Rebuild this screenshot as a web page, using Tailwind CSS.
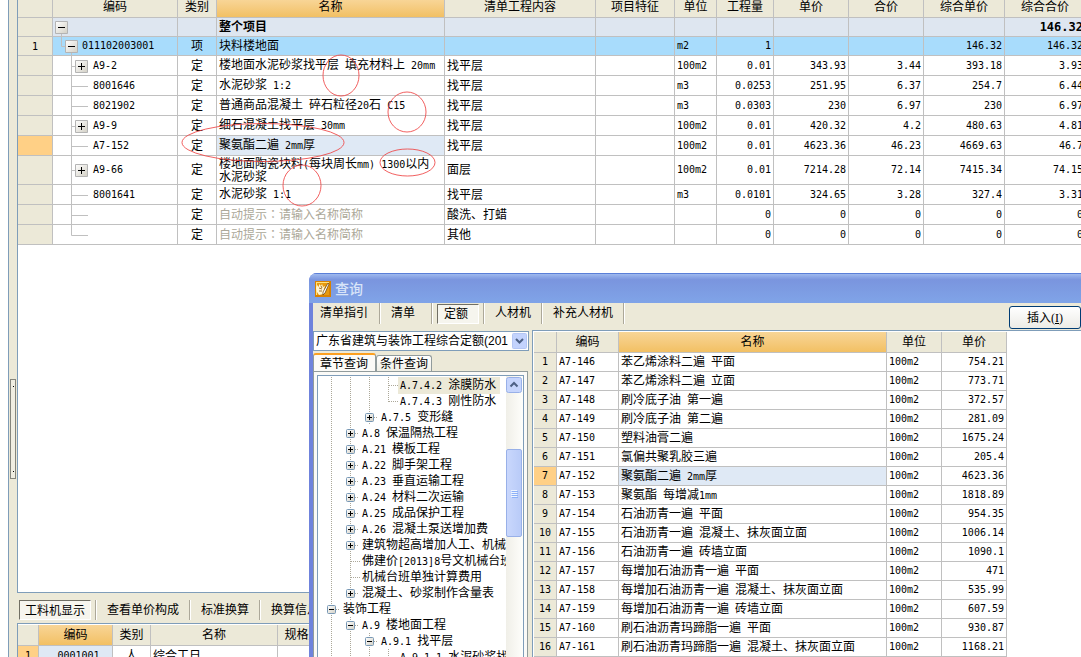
<!DOCTYPE html>
<html lang="zh-CN">
<head>
<meta charset="utf-8">
<title>工程计价</title>
<script src="https://cdn.jsdelivr.net/npm/@tailwindcss/browser@4"></script>
</head>
<body class="h-screen overflow-hidden bg-white font-['DejaVu_Sans_Mono','Noto_Sans_CJK_SC',monospace] text-[12px] leading-3 text-black [&_small]:text-[10px]">

<!-- Shared tree glyphs -->
<svg class="absolute size-0" aria-hidden="true">
  <defs>
    <linearGradient id="face" x1="0" y1="0" x2="1" y2="1"><stop offset="0" stop-color="#fff"/><stop offset="1" stop-color="#d2cfc4"/></linearGradient>
    <symbol id="g-plus" viewBox="0 0 40 19"><path d="M18.5 0v19M18.5 10.5H24" stroke="#c0c0c0" fill="none"/><path d="M22.5 4.5h12v12h-12z" fill="url(#face)" stroke="#b4b4b4"/><path d="M25 10.5h7M28.5 7v7" stroke="#000"/></symbol>
    <symbol id="g-leaf" viewBox="0 0 40 19"><path d="M18.5 0v19M18.5 10.5H35" stroke="#c0c0c0" fill="none"/></symbol>
    <symbol id="g-last" viewBox="0 0 40 19"><path d="M18.5 0v10.5H35" stroke="#c0c0c0" fill="none"/></symbol>
    <symbol id="t-line" viewBox="0 0 19 16"><path d="M9.5 0v16" stroke="#aca899" stroke-dasharray="1 1"/></symbol>
    <symbol id="t-tee" viewBox="0 0 19 16"><path d="M9.5 0v16M10 8.5h9" stroke="#aca899" stroke-dasharray="1 1"/></symbol>
    <symbol id="t-end" viewBox="0 0 19 16"><path d="M9.5 0v9M10 8.5h9" stroke="#aca899" stroke-dasharray="1 1"/></symbol>
    <symbol id="t-plus" viewBox="0 0 19 16"><path d="M9.5 0v16M14 8.5h4" stroke="#aca899" stroke-dasharray="1 1"/><rect x="5.5" y="4.5" width="8" height="8" rx="1" fill="url(#face)" stroke="#7898b5"/><path d="M7 8.5h5M9.5 6v5" stroke="#000"/></symbol>
    <symbol id="t-minus" viewBox="0 0 19 16"><path d="M9.5 0v16M14 8.5h4" stroke="#aca899" stroke-dasharray="1 1"/><rect x="5.5" y="4.5" width="8" height="8" rx="1" fill="url(#face)" stroke="#7898b5"/><path d="M7 8.5h5" stroke="#000"/></symbol>
  </defs>
</svg>

<div class="flex h-full">
  <div class="w-2 shrink-0 bg-white"></div>
  <div class="w-[9px] shrink-0 border-l border-[#7f9db9] bg-[#ece9d8]">
    <div class="mt-[379px] ml-px flex h-[100px] w-1.5 flex-col items-center justify-between border border-[#85857c] bg-[#f0eee2] py-1.5">
      <span class="size-px bg-black"></span><span class="size-px bg-black"></span>
    </div>
  </div>

  <main class="flex min-w-0 flex-1 flex-col bg-[#ece9d8]">
    <section class="min-h-0 flex-1 overflow-hidden border-b border-l border-[#7f9db9] bg-white">
      <table class="w-[1068px] table-fixed border-separate border-spacing-0 whitespace-nowrap [&_td]:overflow-hidden [&_td]:border-r [&_td]:border-b [&_td]:border-[#c0c0c0] [&_td]:p-0 [&_th]:border-r [&_th]:border-b [&_th]:border-[#c0c0c0] [&_th]:p-0 [&_tbody_th]:bg-[#ece9d8] [&_tbody_th]:font-normal [&_td:nth-child(3)]:text-center [&_td:nth-child(4)]:pl-0.5 [&_td:nth-child(5)]:pl-0.5 [&_td:nth-child(7)]:pl-0.5 [&_td:nth-child(7)]:text-[10px] [&_td:nth-child(n+8)]:pr-0.5 [&_td:nth-child(n+8)]:text-right [&_td:nth-child(n+8)]:text-[10px] [&_tbody_svg]:block [&_tbody_svg]:shrink-0 [&_td>div]:flex [&_td>div]:items-center [&_td>div]:text-[10px]">
        <colgroup><col class="w-[35px]"><col class="w-[125px]"><col class="w-[39px]"><col class="w-[228px]"><col class="w-[151px]"><col class="w-[79px]"><col class="w-[42px]"><col class="w-[57px]"><col class="w-[75px]"><col class="w-[75px]"><col class="w-[81px]"><col class="w-[81px]"></colgroup>
        <thead>
          <tr class="h-[18px] bg-[#ece9d8] align-top [&_th]:pt-px [&_th]:font-normal">
            <th></th><th>编码</th><th>类别</th><th class="bg-linear-to-b from-[#f8d596] to-[#f2c063]">名称</th><th>清单工程内容</th><th>项目特征</th><th>单位</th><th>工程量</th><th>单价</th><th>合价</th><th>综合单价</th><th>综合合价</th>
          </tr>
        </thead>
        <tbody>
          <tr class="h-[19px] bg-[#dee6f0] font-bold"><th></th><td><div><svg class="h-[18px] w-10" viewBox="0 0 40 18"><path d="M8.5 15v3" stroke="#c0c0c0"/><path d="M2.5 3.5h12v12h-12z" fill="url(#face)" stroke="#b4b4b4"/><path d="M5 9.5h7" stroke="#000"/></svg></div></td><td></td><td>整个项目</td><td></td><td></td><td></td><td></td><td></td><td></td><td></td><td class="text-[12px]!">146.32</td></tr>
          <tr class="h-[19px] bg-[#a8dcfc]"><th><small>1</small></th><td><div><svg class="h-[18px] w-[29px]" viewBox="0 0 29 18"><path d="M8.5 0v9.5H13M18.5 15v3" stroke="#c0c0c0" fill="none"/><path d="M12.5 3.5h12v12h-12z" fill="url(#face)" stroke="#b4b4b4"/><path d="M15 9.5h7" stroke="#000"/></svg>011102003001</div></td><td>项</td><td>块料楼地面</td><td></td><td></td><td>m2</td><td>1</td><td></td><td></td><td>146.32</td><td>146.32</td></tr>
          <tr class="h-5"><th></th><td><div><svg class="h-[19px] w-10"><use href="#g-plus"/></svg>A9-2</div></td><td>定</td><td>楼地面水泥砂浆找平层<small> </small>填充材料上<small> 20mm</small></td><td>找平层</td><td></td><td>100m2</td><td>0.01</td><td>343.93</td><td>3.44</td><td>393.18</td><td>3.93</td></tr>
          <tr class="h-5"><th></th><td><div><svg class="h-[19px] w-10"><use href="#g-leaf"/></svg>8001646</div></td><td>定</td><td>水泥砂浆<small> 1:2</small></td><td>找平层</td><td></td><td>m3</td><td>0.0253</td><td>251.95</td><td>6.37</td><td>254.7</td><td>6.44</td></tr>
          <tr class="h-5"><th></th><td><div><svg class="h-[19px] w-10"><use href="#g-leaf"/></svg>8021902</div></td><td>定</td><td>普通商品混凝土<small> </small>碎石粒径<small>20</small>石<small> C15</small></td><td>找平层</td><td></td><td>m3</td><td>0.0303</td><td>230</td><td>6.97</td><td>230</td><td>6.97</td></tr>
          <tr class="h-5"><th></th><td><div><svg class="h-[19px] w-10"><use href="#g-plus"/></svg>A9-9</div></td><td>定</td><td>细石混凝土找平层<small> 30mm</small></td><td>找平层</td><td></td><td>100m2</td><td>0.01</td><td>420.32</td><td>4.2</td><td>480.63</td><td>4.81</td></tr>
          <tr class="h-5"><th class="bg-[#ffd086]!"></th><td><div><svg class="h-[19px] w-10"><use href="#g-leaf"/></svg>A7-152</div></td><td>定</td><td class="bg-[#dfe9f5]">聚氨酯二遍<small> 2mm</small>厚</td><td>找平层</td><td></td><td>100m2</td><td>0.01</td><td>4623.36</td><td>46.23</td><td>4669.63</td><td>46.7</td></tr>
          <tr class="h-[29px]"><th></th><td><div><svg class="h-7 w-10" viewBox="0 0 40 28"><path d="M18.5 0v28M18.5 14.5H24" stroke="#c0c0c0" fill="none"/><path d="M22.5 8.5h12v12h-12z" fill="url(#face)" stroke="#b4b4b4"/><path d="M25 14.5h7M28.5 11v7" stroke="#000"/></svg>A9-66</div></td><td>定</td><td>楼地面陶瓷块料<small>(</small>每块周长<small>mm) 1300</small>以内<br>水泥砂浆</td><td>面层</td><td></td><td>100m2</td><td>0.01</td><td>7214.28</td><td>72.14</td><td>7415.34</td><td>74.15</td></tr>
          <tr class="h-5"><th></th><td><div><svg class="h-[19px] w-10"><use href="#g-leaf"/></svg>8001641</div></td><td>定</td><td>水泥砂浆<small> 1:1</small></td><td>找平层</td><td></td><td>m3</td><td>0.0101</td><td>324.65</td><td>3.28</td><td>327.4</td><td>3.31</td></tr>
          <tr class="h-5"><th></th><td><div><svg class="h-[19px] w-10"><use href="#g-leaf"/></svg></div></td><td>定</td><td class="text-[#aca899]">自动提示<span lang="zh-TW" class="font-['Noto_Sans_CJK_TC',sans-serif]">：</span>请输入名称简称</td><td>酸洗、打蜡</td><td></td><td></td><td>0</td><td>0</td><td>0</td><td>0</td><td>0</td></tr>
          <tr class="h-5"><th></th><td><div><svg class="h-[19px] w-10"><use href="#g-last"/></svg></div></td><td>定</td><td class="text-[#aca899]">自动提示<span lang="zh-TW" class="font-['Noto_Sans_CJK_TC',sans-serif]">：</span>请输入名称简称</td><td>其他</td><td></td><td></td><td>0</td><td>0</td><td>0</td><td>0</td><td>0</td></tr>
        </tbody>
      </table>
    </section>

    <section class="flex h-16 shrink-0 flex-col overflow-hidden">
      <div class="flex h-[30px] items-center pt-1 pl-0.5 [&>i]:mx-1 [&>i]:h-5 [&>i]:w-0.5 [&>i]:border-l [&>i]:border-[#aca899] [&>i]:bg-white">
        <button class="h-5 border border-t-[#716f64] border-r-white border-b-white border-l-[#716f64] bg-[#f6f5ee] px-[5px] pt-0.5">工料机显示</button><i></i>
        <button class="px-1.5">查看单价构成</button><i></i>
        <button class="px-1.5">标准换算</button><i></i>
        <button class="px-1.5">换算信息</button>
      </div>
      <div class="flex-1 overflow-hidden border-t border-l border-[#7f9db9] bg-white pt-px">
        <table class="w-[322px] table-fixed border-separate border-spacing-0 whitespace-nowrap [&_td]:border-r [&_td]:border-b [&_td]:border-[#c0c0c0] [&_td]:p-0 [&_th]:border-r [&_th]:border-b [&_th]:border-[#c0c0c0] [&_th]:p-0 [&_th]:font-normal">
          <colgroup><col class="w-[21px]"><col class="w-[74px]"><col class="w-[38px]"><col class="w-[127px]"><col class="w-[62px]"></colgroup>
          <thead><tr class="h-[21px] bg-[#ece9d8]"><th></th><th class="bg-linear-to-b from-[#f8d596] to-[#f2c063]">编码</th><th>类别</th><th>名称</th><th>规格型号</th></tr></thead>
          <tbody><tr class="h-5"><th class="bg-[#ffd086]"><small>1</small></th><td class="bg-[#dfe9f5] pl-1.5! text-center text-[10px]">0001001</td><td class="text-center">人</td><td class="pl-0.5!">综合工日</td><td></td></tr></tbody>
        </table>
      </div>
    </section>
  </main>
</div>

<!-- Review marks drawn over the sheet -->
<svg class="pointer-events-none absolute top-0 left-0 h-[250px] w-[500px]" viewBox="0 0 500 250" fill="none" stroke="#ee4444" stroke-opacity=".85" aria-hidden="true">
  <ellipse cx="341" cy="75.5" rx="18" ry="20.5"/><ellipse cx="407" cy="112" rx="19" ry="20"/><ellipse cx="263" cy="142.5" rx="81" ry="19"/><ellipse cx="407.5" cy="162.5" rx="27.5" ry="13.5"/><ellipse cx="302" cy="185.5" rx="19" ry="20.5"/>
</svg>

<!-- Query window -->
<div role="dialog" aria-label="查询" class="absolute top-[273px] right-0 bottom-0 left-[309px] flex flex-col overflow-hidden rounded-tl-lg bg-[#6f83dc]">
  <header class="flex h-[30px] shrink-0 items-center gap-1 border-t border-[#5a7fd8] bg-linear-to-b from-[#9fb9ee] via-[#7a95de] via-20% to-[#80a4e8] pl-1.5 text-[14px] text-[#d8e4f8]">
    <svg class="size-4" viewBox="0 0 16 16"><path d="M0 0h16v16H0z" fill="#d98200"/><path d="M1 1h13v13H1z" fill="#ffe27a"/><path d="M2 2h12v12H2z" fill="#e79a10"/><path d="M2 4l2 2 0-3 2 2 1-2 1 3 2-1-1 3 2 1-3 4-4 1-2-3-1-4z" fill="#fff4cf"/><path d="M4 7l3 1M4 10l3 0M6 5l1 2" stroke="#8a5000" stroke-width=".8"/><path d="M13 2l1 1-4 9-2 2 0-3z" fill="#fff" stroke="#6b3d00" stroke-width=".7"/></svg>
    <h1 class="font-medium">查询</h1>
  </header>
  <div class="ml-1 flex min-h-0 flex-1 flex-col bg-[#ece9d8]">
    <div class="flex h-[27px] shrink-0 items-start [&>i]:h-[21px] [&>i]:w-0.5 [&>i]:border-l [&>i]:border-[#aca899] [&>i]:bg-white">
      <button class="h-5 pr-[11px] pl-[7px]">清单指引</button><i></i>
      <button class="h-5 pr-4 pl-2.5">清单</button><i></i>
      <button class="mx-1 mt-px h-5 border border-t-[#716f64] border-r-white border-b-white border-l-[#716f64] bg-[#f6f5ee] pr-2.5 pl-1.5">定额</button><i></i>
      <button class="h-5 px-2.5">人材机</button><i></i>
      <button class="h-5 px-2.5">补充人材机</button><i></i>
      <button class="mt-[3px] ml-auto h-[23px] w-[72px] rounded-[3px] border border-[#003c74] bg-linear-to-b from-white to-[#ecebe6] font-['Liberation_Serif','Noto_Sans_CJK_SC',serif]">插入(<u>I</u>)</button>
    </div>
    <div class="flex min-h-0 flex-1 gap-[3px]">
      <div class="flex w-[216px] shrink-0 flex-col">
        <div class="mt-px flex h-5 shrink-0 border border-[#7f9db9] bg-white p-px">
          <select aria-label="定额库" class="min-w-0 flex-1 appearance-none overflow-hidden bg-white pl-px font-['Liberation_Sans','Noto_Sans_CJK_SC',sans-serif] text-[12px] leading-4"><option>广东省建筑与装饰工程综合定额(201</option></select>
          <svg class="h-4 w-[15px] shrink-0" viewBox="0 0 15 16"><rect x=".5" y=".5" width="14" height="15" rx="1" fill="#c3d3fd" stroke="#b4c6f4"/><path d="M4 6l3.5 3.5L11 6" fill="none" stroke="#4d6185" stroke-width="2"/></svg>
        </div>
        <div role="tablist" class="mt-0.5 flex h-[18px] shrink-0 items-end">
          <button role="tab" aria-selected="true" class="-mb-px h-[19px] rounded-t-[3px] border-x border-t-2 border-x-[#919b9c] border-t-[#fca020] bg-[#fbfaf7] pr-[7px] pl-1.5">章节查询</button>
          <button role="tab" class="h-4 rounded-t-[3px] border border-b-0 border-[#919b9c] bg-linear-to-b from-white to-[#f0efe6] px-[3px]">条件查询</button>
        </div>
        <div class="mr-px min-h-0 flex-1 border border-b-0 border-[#919b9c] bg-[#fbfaf7] px-[3px] pt-[3px]">
          <div class="flex h-full border border-b-0 border-[#7f9db9] bg-white">
            <ul class="min-w-0 flex-1 overflow-hidden pt-px pl-1 whitespace-nowrap [&_li]:flex [&_li]:h-4 [&_li]:items-center [&_span]:px-0.5 [&_svg]:h-4 [&_svg]:w-[19px] [&_svg]:shrink-0">
              <li><svg><use href="#t-line"/></svg><svg><use href="#t-line"/></svg><svg><use href="#t-line"/></svg><svg><use href="#t-tee"/></svg><span class="bg-[#ece9d8] py-0.5 pr-1!"><small>A.7.4.2 </small>涂膜防水</span></li>
              <li><svg><use href="#t-line"/></svg><svg><use href="#t-line"/></svg><svg><use href="#t-line"/></svg><svg><use href="#t-end"/></svg><span><small>A.7.4.3 </small>刚性防水</span></li>
              <li><svg><use href="#t-line"/></svg><svg><use href="#t-line"/></svg><svg><use href="#t-plus"/></svg><span><small>A.7.5 </small>变形缝</span></li>
              <li><svg><use href="#t-line"/></svg><svg><use href="#t-plus"/></svg><span><small>A.8 </small>保温隔热工程</span></li>
              <li><svg><use href="#t-line"/></svg><svg><use href="#t-plus"/></svg><span><small>A.21 </small>模板工程</span></li>
              <li><svg><use href="#t-line"/></svg><svg><use href="#t-plus"/></svg><span><small>A.22 </small>脚手架工程</span></li>
              <li><svg><use href="#t-line"/></svg><svg><use href="#t-plus"/></svg><span><small>A.23 </small>垂直运输工程</span></li>
              <li><svg><use href="#t-line"/></svg><svg><use href="#t-plus"/></svg><span><small>A.24 </small>材料二次运输</span></li>
              <li><svg><use href="#t-line"/></svg><svg><use href="#t-plus"/></svg><span><small>A.25 </small>成品保护工程</span></li>
              <li><svg><use href="#t-line"/></svg><svg><use href="#t-plus"/></svg><span><small>A.26 </small>混凝土泵送增加费</span></li>
              <li><svg><use href="#t-line"/></svg><svg><use href="#t-plus"/></svg><span>建筑物超高增加人工、机械</span></li>
              <li><svg><use href="#t-line"/></svg><svg><use href="#t-tee"/></svg><span>佛建价<small>[2013]8</small>号文机械台班</span></li>
              <li><svg><use href="#t-line"/></svg><svg><use href="#t-tee"/></svg><span>机械台班单独计算费用</span></li>
              <li><svg><use href="#t-line"/></svg><svg><use href="#t-plus"/></svg><span>混凝土、砂浆制作含量表</span></li>
              <li><svg><use href="#t-minus"/></svg><span>装饰工程</span></li>
              <li><svg><use href="#t-line"/></svg><svg><use href="#t-minus"/></svg><span><small>A.9 </small>楼地面工程</span></li>
              <li><svg><use href="#t-line"/></svg><svg><use href="#t-line"/></svg><svg><use href="#t-minus"/></svg><span><small>A.9.1 </small>找平层</span></li>
              <li><svg><use href="#t-line"/></svg><svg><use href="#t-line"/></svg><svg><use href="#t-line"/></svg><svg><use href="#t-tee"/></svg><span><small>A.9.1.1 </small>水泥砂浆找平层</span></li>
            </ul>
            <div class="flex w-[17px] shrink-0 flex-col bg-linear-to-r from-[#f0efe8] to-[#fefefb] pt-px pr-px">
              <svg class="h-4 w-4 shrink-0" viewBox="0 0 16 16"><rect x=".5" y=".5" width="15" height="15" rx="2" fill="#c6d5fd" stroke="#98b0e8"/><path d="M4.5 9.5L8 6l3.5 3.5" fill="none" stroke="#4d6185" stroke-width="2"/></svg>
              <div class="mt-14 flex h-[88px] shrink-0 flex-col items-center justify-center gap-px rounded-xs border border-[#98b0e8] bg-linear-to-r from-[#c9d7fc] to-[#b9cbf8] [&_i]:h-px [&_i]:w-1.5 [&_i]:bg-[#eef4fe] [&_i]:shadow-[1px_1px_0_#8cb0f8]">
                <i></i><i></i><i></i><i></i>
              </div>
            </div>
          </div>
        </div>
      </div>
      <div class="min-w-0 flex-1 overflow-hidden border-t border-l border-[#7f9db9] bg-white pt-px pl-px">
        <table class="w-[473px] table-fixed border-separate border-spacing-0 whitespace-nowrap [&_td]:border-r [&_td]:border-b [&_td]:border-[#c0c0c0] [&_td]:p-0 [&_td]:pl-0.5 [&_td:nth-child(2)]:text-[10px] [&_td:nth-child(4)]:text-[10px] [&_td:nth-child(5)]:pr-0.5 [&_td:nth-child(5)]:text-right [&_td:nth-child(5)]:text-[10px] [&_th]:border-r [&_th]:border-b [&_th]:border-[#c0c0c0] [&_th]:p-0 [&_th]:font-normal [&_tbody_th]:bg-[#ece9d8] [&_tbody_th]:text-[10px] [&_tbody_tr]:h-[19px]">
          <colgroup><col class="w-[23px]"><col class="w-[62px]"><col class="w-[268px]"><col class="w-[55px]"><col class="w-[65px]"></colgroup>
          <thead><tr class="h-[21px] bg-[#ece9d8]"><th></th><th>编码</th><th class="bg-linear-to-b from-[#f8d596] to-[#f2c063]">名称</th><th>单位</th><th>单价</th></tr></thead>
          <tbody>
            <tr><th>1</th><td>A7-146</td><td>苯乙烯涂料二遍<small> </small>平面</td><td>100m2</td><td>754.21</td></tr>
            <tr><th>2</th><td>A7-147</td><td>苯乙烯涂料二遍<small> </small>立面</td><td>100m2</td><td>773.71</td></tr>
            <tr><th>3</th><td>A7-148</td><td>刷冷底子油<small> </small>第一遍</td><td>100m2</td><td>372.57</td></tr>
            <tr><th>4</th><td>A7-149</td><td>刷冷底子油<small> </small>第二遍</td><td>100m2</td><td>281.09</td></tr>
            <tr><th>5</th><td>A7-150</td><td>塑料油膏二遍</td><td>100m2</td><td>1675.24</td></tr>
            <tr><th>6</th><td>A7-151</td><td>氯偏共聚乳胶三遍</td><td>100m2</td><td>205.4</td></tr>
            <tr><th class="bg-[#ffd086]!">7</th><td>A7-152</td><td class="bg-[#dfe9f5]">聚氨酯二遍<small> 2mm</small>厚</td><td>100m2</td><td>4623.36</td></tr>
            <tr><th>8</th><td>A7-153</td><td>聚氨酯<small> </small>每增减<small>1mm</small></td><td>100m2</td><td>1818.89</td></tr>
            <tr><th>9</th><td>A7-154</td><td>石油沥青一遍<small> </small>平面</td><td>100m2</td><td>954.35</td></tr>
            <tr><th>10</th><td>A7-155</td><td>石油沥青一遍<small> </small>混凝土、抹灰面立面</td><td>100m2</td><td>1006.14</td></tr>
            <tr><th>11</th><td>A7-156</td><td>石油沥青一遍<small> </small>砖墙立面</td><td>100m2</td><td>1090.1</td></tr>
            <tr><th>12</th><td>A7-157</td><td>每增加石油沥青一遍<small> </small>平面</td><td>100m2</td><td>471</td></tr>
            <tr><th>13</th><td>A7-158</td><td>每增加石油沥青一遍<small> </small>混凝土、抹灰面立面</td><td>100m2</td><td>535.99</td></tr>
            <tr><th>14</th><td>A7-159</td><td>每增加石油沥青一遍<small> </small>砖墙立面</td><td>100m2</td><td>607.59</td></tr>
            <tr><th>15</th><td>A7-160</td><td>刷石油沥青玛蹄脂一遍<small> </small>平面</td><td>100m2</td><td>930.87</td></tr>
            <tr><th>16</th><td>A7-161</td><td>刷石油沥青玛蹄脂一遍<small> </small>混凝土、抹灰面立面</td><td>100m2</td><td>1168.21</td></tr>
          </tbody>
        </table>
      </div>
    </div>
  </div>
</div>
</body>
</html>
